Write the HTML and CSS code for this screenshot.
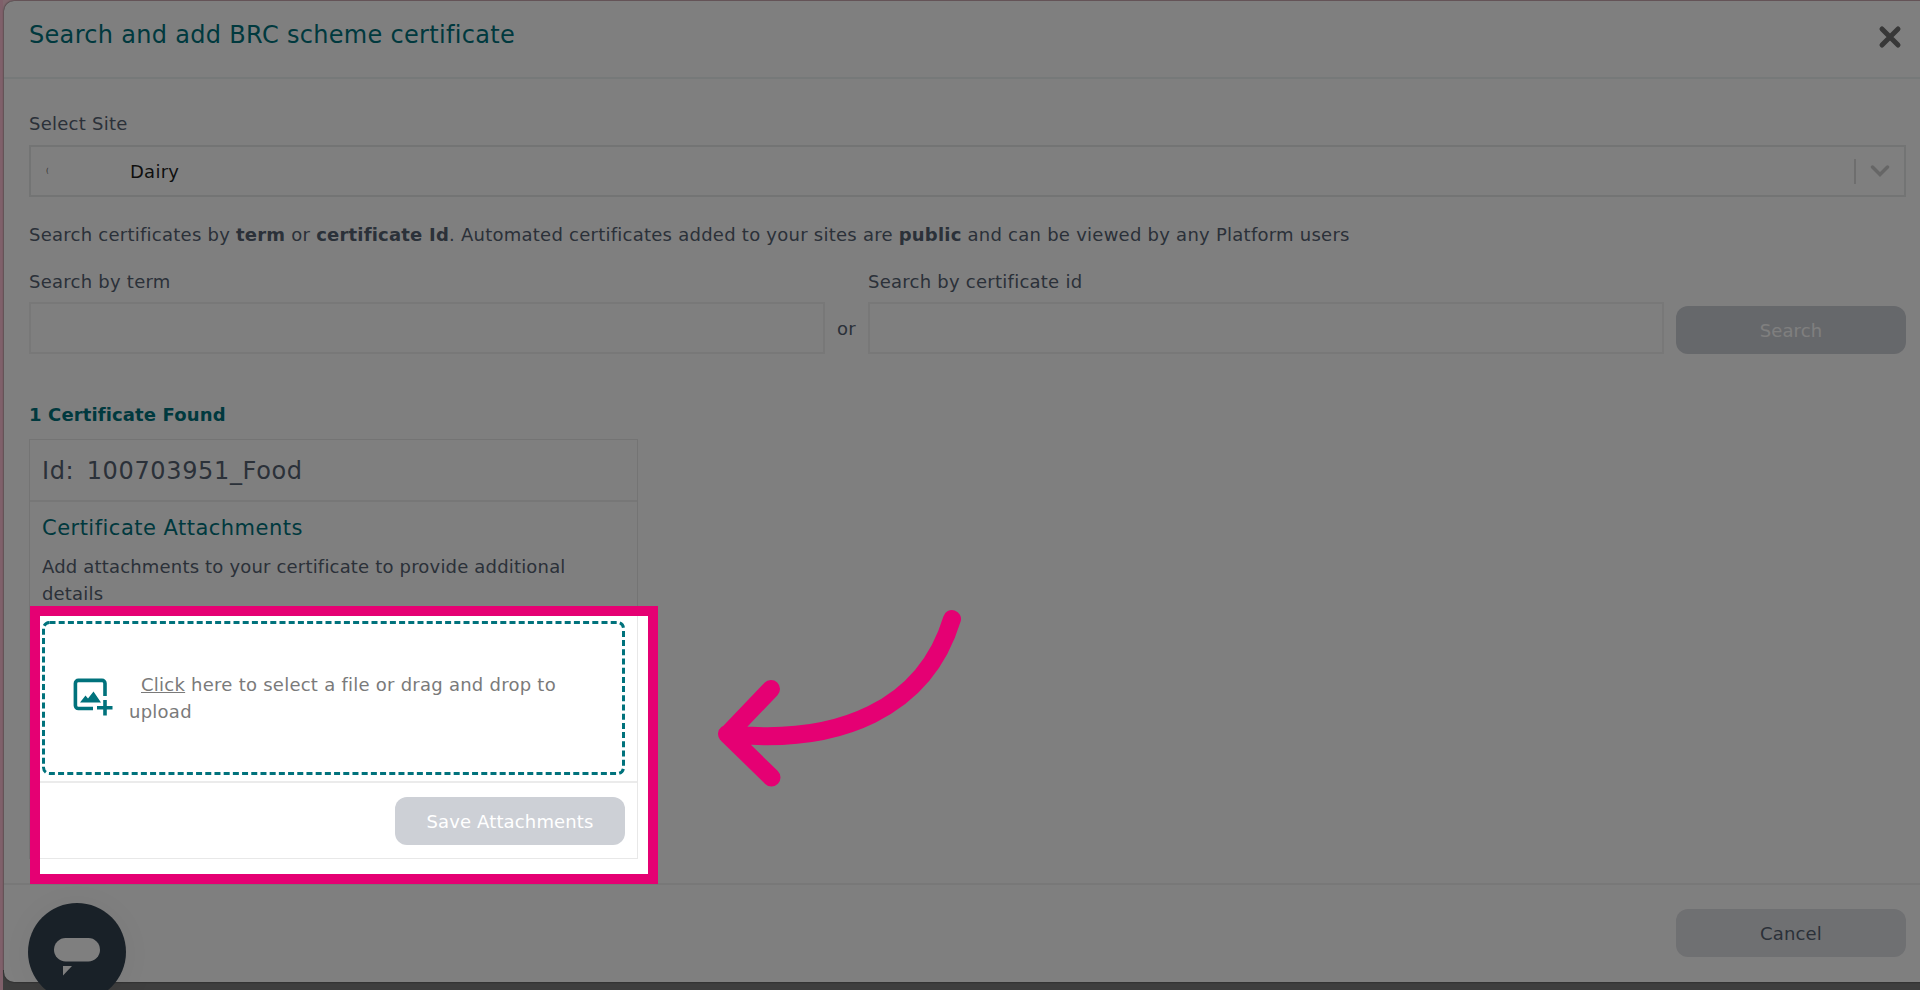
FILE: index.html
```
<!DOCTYPE html>
<html lang="en">
<head>
  <meta charset="utf-8">
  <title>Search and add BRC scheme certificate</title>
  <link rel="stylesheet" href="styles.css">
</head>
<body>
  <div class="modal">
    <div class="modal-header">
      <h1>Search and add BRC scheme certificate</h1>
      <button class="close" aria-label="Close">
        <svg width="24" height="24" viewBox="0 0 24 24"><path d="M4 4L20 20M20 4L4 20"/></svg>
      </button>
    </div>

    <div class="modal-body">
      <label class="site-label">Select Site</label>
      <div class="select">
        <span class="masked">(</span>
        <span class="value">Dairy</span>
        <span class="separator"></span>
        <svg class="chevron" width="20" height="12" viewBox="0 0 20 12"><path d="M2.5 2L10 9.5L17.5 2"/></svg>
      </div>

      <p class="hint">Search certificates by <b>term</b> or <b>certificate Id</b>. Automated certificates added to your sites are <b>public</b> and can be viewed by any Platform users</p>

      <form class="search-form">
        <div class="field">
          <label for="term">Search by term</label>
          <input type="text" id="term">
        </div>
        <span class="or">or</span>
        <div class="field">
          <label for="certId">Search by certificate id</label>
          <input type="text" id="certId">
        </div>
        <button type="button" class="btn btn-search" disabled>Search</button>
      </form>

      <h2 class="found">1 Certificate Found</h2>

      <div class="card">
        <div class="card-id">Id: 100703951_Food</div>
        <div class="card-body">
          <h3>Certificate Attachments</h3>
          <p>Add attachments to your certificate to provide additional details</p>
          <div class="dropzone">
            <svg class="dropzone-border" width="583" height="154"><rect x="1.5" y="1.5" width="580" height="151" rx="6"/></svg>
            <svg class="image-icon" width="40" height="40" viewBox="0 0 40 40">
              <path class="frame" d="M32 18V5.4a3 3 0 0 0-3-3H5.4a3 3 0 0 0-3 3V27.5a3 3 0 0 0 3 3H20"/>
              <path class="hill" d="M7 24.5L12.5 17.5l2.5 3L20.5 13.5L28 24.5z"/>
              <path class="plus" d="M32 22V37.5M24 29.8H39.5"/>
            </svg>
            <div class="dropzone-text"><u>Click</u> here to select a file or drag and drop to upload</div>
          </div>
        </div>
        <div class="card-footer">
          <button type="button" class="btn btn-save" disabled>Save Attachments</button>
        </div>
      </div>
    </div>

    <div class="modal-footer">
      <button type="button" class="btn btn-cancel">Cancel</button>
    </div>
  </div>

  <div class="chat">
    <svg width="48" height="40" viewBox="0 0 48 40">
      <rect x="1" y="1" width="46" height="23.5" rx="11.7"/>
      <path d="M10 29h9l-9 9.5z"/>
    </svg>
  </div>

  <div class="spotlight"></div>
  <svg class="arrow" width="260" height="190" viewBox="0 0 260 190">
    <path d="M242 19C215 108 130 146 17 134M61 89L17.5 134.5L61.5 177.5"/>
  </svg>
</body>
</html>
```
FILE: styles.css
```
* {
  box-sizing: border-box;
}

body {
  position: relative;
  width: 1920px;
  height: 990px;
  margin: 0;
  padding: 1px 0 0 4px;
  overflow: hidden;
  font-family: "DejaVu Sans", Verdana, sans-serif;
  font-size: 18px;
  line-height: 27px;
  letter-spacing: 0.25px;
  color: #566272;
  background: linear-gradient(90deg, #ffc0d4 0 3px, transparent 3px), linear-gradient(#ffd0dc 0 970px, #7c7c7c 970px);
}

h1, h2, h3, p {
  margin: 0;
  font-weight: normal;
}

button {
  font: inherit;
  border: none;
  padding: 0;
}

.modal {
  display: flex;
  flex-direction: column;
  width: 1930px;
  height: 981px;
  background: #fff;
  border-radius: 10px;
  box-shadow: 0 0 2px #333;
}

.modal-header {
  display: flex;
  justify-content: space-between;
  height: 78px;
  padding: 16px 32px 0 25px;
  border-bottom: 2px solid #ecf2f2;
}

.modal-header h1 {
  font-size: 24px;
  line-height: 36px;
  letter-spacing: 0.31px;
  color: #00727c;
}

.close {
  height: 24px;
  margin: 8px 0 0;
  background: none;
}

.close path {
  fill: none;
  stroke: #707070;
  stroke-width: 5;
  stroke-linecap: round;
}

.modal-body {
  flex: 1;
  padding: 31px 24px 0 25px;
}

.site-label {
  display: block;
}

.select {
  display: flex;
  align-items: center;
  width: 1877px;
  height: 52px;
  margin-top: 8px;
  padding: 0 14px 0 15px;
  border: 2px solid #e6e8e8;
  color: #1f1f1f;
}

.masked {
  width: 4px;
  font-size: 7px;
  letter-spacing: 0;
  color: #555;
}

.value {
  flex: 1;
  margin-left: 80px;
}

.separator {
  width: 2px;
  height: 25px;
  background: #dcdcdc;
}

.chevron {
  margin-left: 14px;
}

.chevron path {
  fill: none;
  stroke: #ccc;
  stroke-width: 3.5;
  stroke-linecap: round;
}

.hint {
  margin-top: 24px;
}

.hint b {
  letter-spacing: 0.2px;
}

.search-form {
  display: flex;
  align-items: flex-end;
  margin-top: 20px;
}

.field label {
  display: block;
  margin-bottom: 7px;
}

.field input {
  display: block;
  width: 796px;
  height: 52px;
  border: 2px solid #f0f0f0;
  background: none;
}

.or {
  width: 43px;
  margin-bottom: 12px;
  text-align: center;
}

.btn {
  width: 230px;
  height: 48px;
  border-radius: 12px;
  letter-spacing: 0.15px;
  color: #fff;
  background: #cdd0d6;
}

.btn-search {
  margin-left: 12px;
}

.found {
  margin-top: 47px;
  font-size: 18px;
  font-weight: bold;
  letter-spacing: 0.13px;
  color: #00727c;
}

.card {
  width: 609px;
  margin-top: 11px;
  border: 1px solid #e8e8e8;
}

.card-id {
  height: 62px;
  padding: 13px 12px 0;
  border-bottom: 2px solid #efefef;
  font-size: 24px;
  line-height: 36px;
  letter-spacing: 0.65px;
  word-spacing: 4px;
}

.card-body {
  padding: 11px 12px 6px;
}

.card-body h3 {
  margin-bottom: 10px;
  font-size: 21px;
  line-height: 30px;
  letter-spacing: 0.48px;
  color: #00727c;
}

.card-body p {
  letter-spacing: 0.18px;
}

.dropzone {
  position: relative;
  display: flex;
  align-items: center;
  height: 154px;
  padding: 0 32px 0 31px;
  margin-top: 14px;
}

.dropzone-border {
  position: absolute;
  top: 0;
  left: 0;
}

.dropzone-border rect {
  fill: none;
  stroke: #00727c;
  stroke-width: 3;
  stroke-dasharray: 6 3.2;
}

.image-icon {
  flex: none;
}

.frame {
  fill: none;
  stroke: #00727c;
  stroke-width: 3.6;
}

.hill {
  fill: #00727c;
}

.plus {
  stroke: #00727c;
  stroke-width: 3.6;
}

.dropzone-text {
  margin-left: 16px;
  text-indent: 12px;
  color: #7a7a7a;
}

.card-footer {
  display: flex;
  justify-content: flex-end;
  padding: 14px 12px 13px;
  border-top: 2px solid #ebebeb;
}

.modal-footer {
  display: flex;
  height: 99px;
  padding: 24px 28px 0;
  justify-content: flex-end;
  border-top: 2px solid #f0f0f0;
}

.btn-cancel {
  color: #566272;
  background: #dfe0e4;
}

/* chat launcher floating over the modal corner */
.chat {
  position: absolute;
  left: 28px;
  top: 903px;
  display: flex;
  justify-content: center;
  width: 98px;
  height: 98px;
  padding-top: 34px;
  border-radius: 50%;
  background: #334250;
  box-shadow: 0 2px 40px rgba(0, 0, 0, 0.06);
}

.chat svg {
  fill: #fff;
}

/* dims everything outside the highlighted box */
.spotlight {
  position: absolute;
  left: 30px;
  top: 606px;
  width: 628px;
  height: 278px;
  border: 10px solid #e50073;
  box-shadow: 0 0 0 2000px rgba(0, 0, 0, 0.5);
}

.arrow {
  position: absolute;
  left: 710px;
  top: 600px;
  fill: none;
  stroke: #e50073;
  stroke-width: 18;
  stroke-linecap: round;
  stroke-linejoin: round;
}
```
